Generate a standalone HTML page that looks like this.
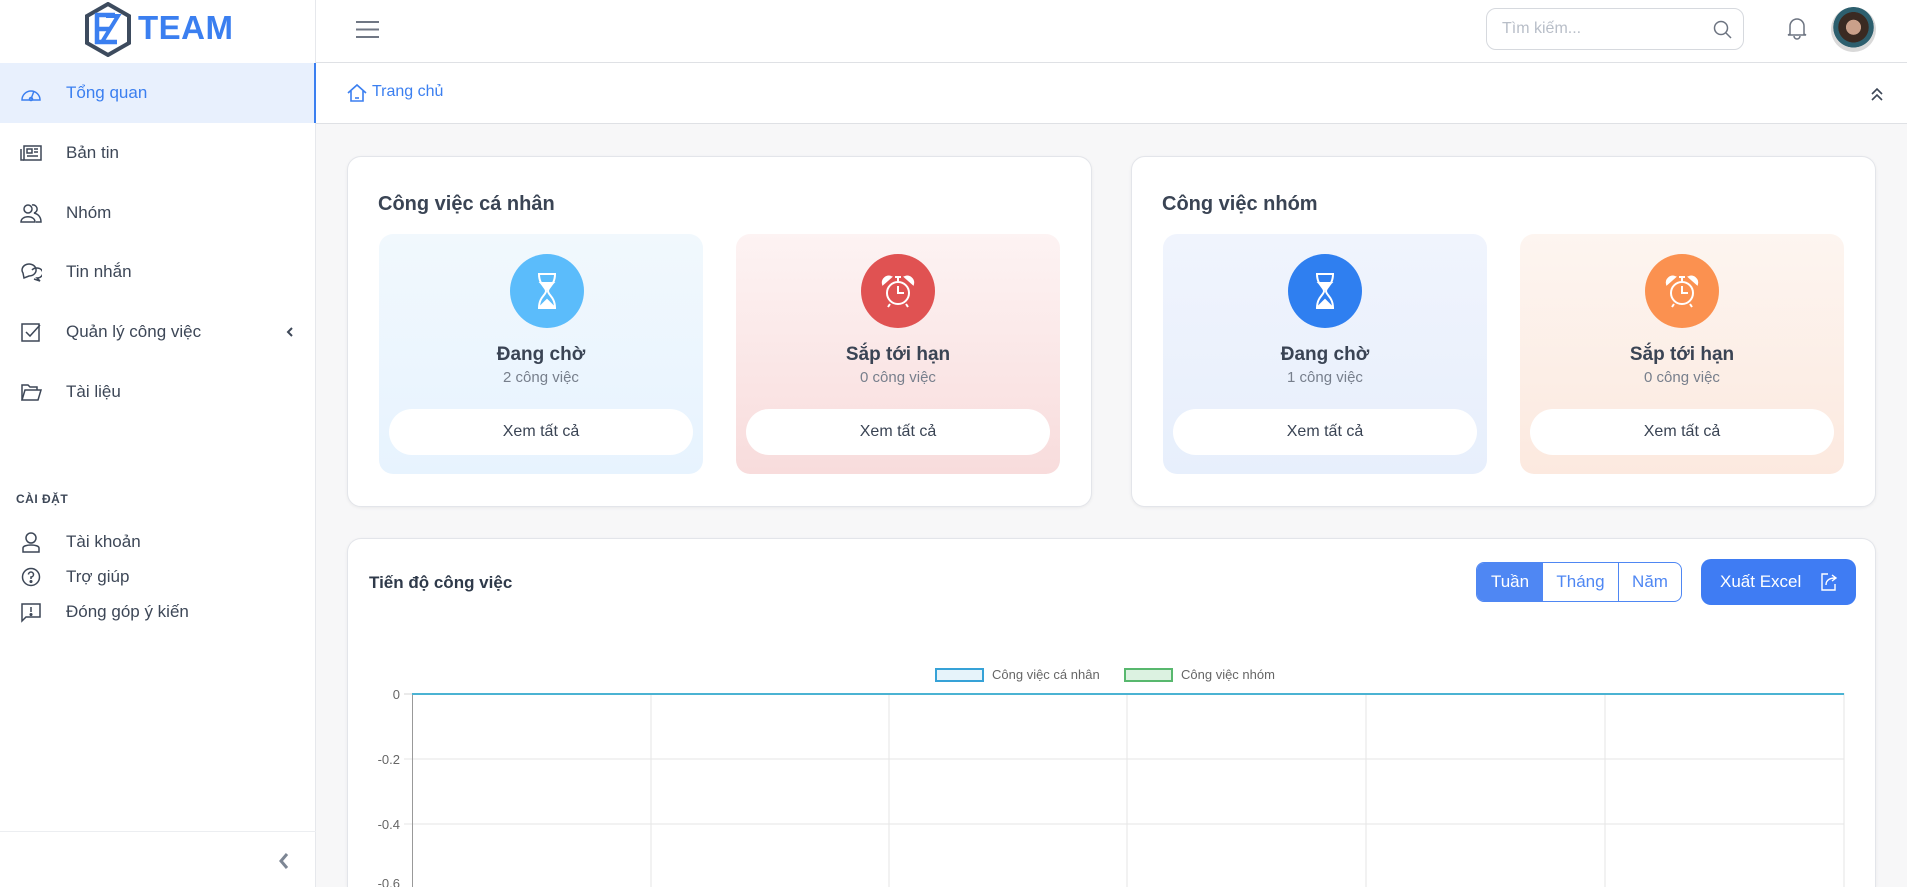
<!DOCTYPE html>
<html style="width:1907px;height:887px;overflow:hidden"><head><meta charset="utf-8">
<style>
*{box-sizing:border-box;margin:0;padding:0}
html,body{width:1907px;height:887px;overflow:hidden}
body{background:#f7f7f8;font-family:"Liberation Sans",sans-serif;color:#3a4454;position:relative}
#wrap{position:absolute;left:0;top:0;width:1907px;height:887px;overflow:hidden}
.abs{position:absolute}
#side{left:0;top:0;width:316px;height:887px;background:#fff;border-right:1px solid #e6e8ec}
.mi{position:absolute;left:0;width:316px;height:60px;display:flex;align-items:center;font-size:17px;color:#3d4757}
.mi svg{position:absolute;left:20px}
.mi span{position:absolute;left:66px}
.mi.act{background:#e8f0fd;color:#3b7ff0}
.mi.act:after{content:"";position:absolute;right:-1px;top:0;width:3px;height:60px;background:#3b7ff0}
.si{position:absolute;left:0;display:flex;align-items:center;font-size:17px;color:#3d4757}
.si svg{position:absolute;left:20px}
.si span{position:absolute;left:66px;white-space:nowrap}
#hdr{left:316px;top:0;width:1591px;height:63px;background:#fff;border-bottom:1px solid #dfe1e5}
#bc{left:316px;top:63px;width:1591px;height:61px;background:#fff;border-bottom:1px solid #dfe1e5}
.card{position:absolute;background:#fff;border:1px solid #e3e5ea;border-radius:14px;box-shadow:0 1px 3px rgba(0,0,0,.06)}
.ct{position:absolute;font-size:20px;font-weight:bold;color:#3a4454}
.box{position:absolute;width:324px;height:240px;border-radius:14px;text-align:center}
.circ{position:absolute;left:125px;top:20px;width:74px;height:74px;border-radius:50%}
.circ svg{position:absolute;left:17px;top:17px}
.bt{position:absolute;left:0;width:100%;top:110px;font-size:19px;font-weight:bold;color:#3a4454}
.bs{position:absolute;left:0;width:100%;top:135px;font-size:15px;color:#777f8c}
.pill{position:absolute;left:10px;right:10px;top:175px;height:46px;background:#fff;border-radius:23px;font-size:16px;color:#3a4454;line-height:46px}
.yl{position:absolute;font-size:13px;color:#666;text-align:right;width:40px;left:360px;line-height:15px}
</style></head><body><div id="wrap">
<div id="side" class="abs">
  <svg class="abs" style="left:84px;top:2px" width="48" height="55" viewBox="0 0 48 55">
    <polygon points="24,2 45,14 45,41 24,53 3,41 3,14" fill="none" stroke="#3d4b5e" stroke-width="4"/>
    <path d="M31 13 H13 V40 H33 M13 27 H26" fill="none" stroke="#3b7ff0" stroke-width="4.5"/>
    <path d="M22 14 H34 L18 40" fill="none" stroke="#3b7ff0" stroke-width="4"/>
  </svg>
  <div class="abs" style="left:138px;top:9px;font-size:33px;font-weight:bold;color:#3b7ff0;letter-spacing:.5px">TEAM</div>

  <div class="mi act" style="top:63px"><svg width="22" height="22" viewBox="0 0 22 22" fill="none" stroke="#3b7ff0" stroke-width="1.5"><path d="M2 18 A9 9 0 1 1 20 18 Z"/><path d="M11 17 L14 9"/><circle cx="11" cy="17" r="1.5"/></svg><span>Tổng quan</span></div>
  <div class="mi" style="top:123px"><svg width="22" height="22" viewBox="0 0 22 22" fill="none" stroke="#3d4757" stroke-width="1.5"><rect x="4" y="4" width="17" height="14"/><path d="M1 7 V18 H4"/><rect x="7" y="7" width="5" height="4"/><path d="M14 7h4M14 10h4M7 14h11"/></svg><span>Bản tin</span></div>
  <div class="mi" style="top:183px"><svg width="22" height="22" viewBox="0 0 22 22" fill="none" stroke="#3d4757" stroke-width="1.5"><circle cx="8" cy="7" r="4"/><path d="M1 20 C1 13 15 13 15 20 Z"/><path d="M12 3 A4 4 0 1 1 14 11 C18 12 21 15 21 20 H16"/></svg><span>Nhóm</span></div>
  <div class="mi" style="top:242px"><svg width="22" height="22" viewBox="0 0 22 22" fill="none" stroke="#3d4757" stroke-width="1.5"><path d="M3 12 A7 6 0 1 1 9 15 L4 17 Z"/><path d="M12 9 A6 5 0 1 1 17 17 L20 20 L14 18"/></svg><span>Tin nhắn</span></div>
  <div class="mi" style="top:302px"><svg width="22" height="22" viewBox="0 0 22 22" fill="none" stroke="#3d4757" stroke-width="1.5"><rect x="2" y="3" width="17" height="17"/><path d="M6 11 L10 15 L20 4"/></svg><span>Quản lý công việc</span><svg style="left:286px" width="8" height="10" viewBox="0 0 8 10"><path d="M6 1 L2 5 L6 9" stroke="#3d4757" stroke-width="2" fill="none"/></svg></div>
  <div class="mi" style="top:362px"><svg width="22" height="22" viewBox="0 0 22 22" fill="none" stroke="#3d4757" stroke-width="1.5"><path d="M2 19 V4 H8 L10 6 H17 V9"/><path d="M2 19 L5 9 H21 L18 19 Z"/></svg><span>Tài liệu</span></div>

  <div class="abs" style="left:16px;top:492px;font-size:12px;font-weight:bold;color:#3d4757;letter-spacing:.5px">CÀI ĐẶT</div>
  <div class="si" style="top:530px;height:24px"><svg width="22" height="22" viewBox="0 0 22 22" fill="none" stroke="#3d4757" stroke-width="1.5"><circle cx="11" cy="7" r="5"/><path d="M3 21 V17 C3 13 19 13 19 17 V21 Z"/></svg><span>Tài khoản</span></div>
  <div class="si" style="top:565px;height:24px"><svg width="22" height="22" viewBox="0 0 22 22" fill="none" stroke="#3d4757" stroke-width="1.5"><circle cx="11" cy="11" r="8.5"/><path d="M8.5 8.5 A2.5 2.5 0 1 1 11 11 V13"/><circle cx="11" cy="15.5" r=".8" fill="#3d4757"/></svg><span>Trợ giúp</span></div>
  <div class="si" style="top:600px;height:24px"><svg width="22" height="22" viewBox="0 0 22 22" fill="none" stroke="#3d4757" stroke-width="1.5"><path d="M2 3 H20 V16 H6 L2 20 Z"/><path d="M11 6 V11"/><circle cx="11" cy="13.5" r=".8" fill="#3d4757"/></svg><span>Đóng góp ý kiến</span></div>

  <div class="abs" style="left:0;top:831px;width:316px;border-top:1px solid #eceef1"></div>
  <svg class="abs" style="left:278px;top:852px" width="12" height="18" viewBox="0 0 12 18"><path d="M9 2 L3 9 L9 16" stroke="#7d8694" stroke-width="3" fill="none"/></svg>
</div>

<div id="hdr" class="abs">
  <svg class="abs" style="left:40px;top:20px" width="23" height="19" viewBox="0 0 23 19"><path d="M0 2h23M0 9.5h23M0 17h23" stroke="#707784" stroke-width="2"/></svg>
  <div class="abs" style="left:1170px;top:8px;width:258px;height:42px;border:1px solid #d6d9de;border-radius:10px">
    <span class="abs" style="left:15px;top:11px;font-size:16px;color:#b8bec8">Tìm kiếm...</span>
    <svg class="abs" style="left:226px;top:11px" width="20" height="20" viewBox="0 0 20 20" fill="none" stroke="#6c7380" stroke-width="1.5"><circle cx="8" cy="8" r="6.5"/><path d="M13 13 L18 18"/></svg>
  </div>
  <svg class="abs" style="left:1471px;top:16px" width="20" height="24" viewBox="0 0 20 24" fill="none" stroke="#6c7380" stroke-width="1.5"><path d="M3 18 V10 A7 7 0 0 1 17 10 V18 L19 19 H1 Z"/><path d="M7 20 A3 3 0 0 0 13 20"/></svg>
  <div class="abs" style="left:1515px;top:7px;width:45px;height:45px;border-radius:50%;background:radial-gradient(circle at 50% 45%,#caa08a 0 22%,#3a2a22 23% 45%,#2d5f6e 46% 60%,#d9d9d9 61%)"></div>
</div>

<div id="bc" class="abs">
  <svg class="abs" style="left:31px;top:20px" width="20" height="20" viewBox="0 0 20 20" fill="none" stroke="#3b7ff0" stroke-width="1.6"><path d="M1 10 L10 2 L19 10 M4 8 V18 H16 V8"/><path d="M8 15 H12"/></svg>
  <span class="abs" style="left:56px;top:20px;font-size:16px;color:#3b7ff0">Trang chủ</span>
  <svg class="abs" style="left:1554px;top:23px" width="14" height="16" viewBox="0 0 14 16" fill="none" stroke="#3d4757" stroke-width="1.6"><path d="M2 8 L7 3 L12 8 M2 14 L7 9 L12 14"/></svg>
</div>

<div class="card" style="left:347px;top:156px;width:745px;height:351px">
  <div class="ct" style="left:30px;top:36px">Công việc cá nhân</div>
  <div class="box" style="left:31px;top:77px;background:linear-gradient(#f1f8fd,#e7f3fe)">
    <div class="circ" style="left:131px;background:#5bbcfb"><svg width="40" height="40" viewBox="0 0 40 40" fill="none" stroke="#fff" stroke-width="2"><path d="M11 3h18M11 37h18M12 3 C12 14 19 16 19 20 C19 24 12 26 12 37 M28 3 C28 14 21 16 21 20 C21 24 28 26 28 37"/><path d="M14 12 H26 L20 18Z M14 35 L20 29 L26 35Z" fill="#fff"/></svg></div>
    <div class="bt">Đang chờ</div><div class="bs">2 công việc</div><div class="pill">Xem tất cả</div>
  </div>
  <div class="box" style="left:388px;top:77px;background:linear-gradient(#fdf3f3,#f8dcdc)">
    <div class="circ" style="left:125px;background:#e05252"><svg width="40" height="40" viewBox="0 0 40 40" fill="none" stroke="#fff" stroke-width="2"><circle cx="20" cy="22" r="11"/><path d="M20 15 V22 H26 M20 11 V6 M17 6 H23 M12 33 L10 36 M28 33 L30 36"/><path d="M5 13 A6 6 0 0 1 13 6 Z M35 13 A6 6 0 0 0 27 6 Z" fill="#fff"/></svg></div>
    <div class="bt">Sắp tới hạn</div><div class="bs">0 công việc</div><div class="pill">Xem tất cả</div>
  </div>
</div>

<div class="card" style="left:1131px;top:156px;width:745px;height:351px">
  <div class="ct" style="left:30px;top:36px">Công việc nhóm</div>
  <div class="box" style="left:31px;top:77px;background:linear-gradient(#f0f4fd,#e7effc)">
    <div class="circ" style="left:125px;background:#2f7ff0"><svg width="40" height="40" viewBox="0 0 40 40" fill="none" stroke="#fff" stroke-width="2"><path d="M11 3h18M11 37h18M12 3 C12 14 19 16 19 20 C19 24 12 26 12 37 M28 3 C28 14 21 16 21 20 C21 24 28 26 28 37"/><path d="M14 12 H26 L20 18Z M14 35 L20 29 L26 35Z" fill="#fff"/></svg></div>
    <div class="bt">Đang chờ</div><div class="bs">1 công việc</div><div class="pill">Xem tất cả</div>
  </div>
  <div class="box" style="left:388px;top:77px;background:linear-gradient(#fdf5f0,#fce9df)">
    <div class="circ" style="left:125px;background:#fb9150"><svg width="40" height="40" viewBox="0 0 40 40" fill="none" stroke="#fff" stroke-width="2"><circle cx="20" cy="22" r="11"/><path d="M20 15 V22 H26 M20 11 V6 M17 6 H23 M12 33 L10 36 M28 33 L30 36"/><path d="M5 13 A6 6 0 0 1 13 6 Z M35 13 A6 6 0 0 0 27 6 Z" fill="#fff"/></svg></div>
    <div class="bt">Sắp tới hạn</div><div class="bs">0 công việc</div><div class="pill">Xem tất cả</div>
  </div>
</div>

<div class="card" style="left:347px;top:538px;width:1529px;height:349px;border-bottom:none;border-radius:14px 14px 0 0">
  <div class="abs" style="left:21px;top:34px;font-size:17px;font-weight:bold;color:#2f3a4a">Tiến độ công việc</div>
  <div class="abs" style="left:1128px;top:23px;width:206px;height:40px;border:1px solid #4f87f3;border-radius:8px;overflow:hidden;display:flex;font-size:17px">
    <div style="width:66px;background:#4f87f3;color:#fff;text-align:center;line-height:38px">Tuần</div>
    <div style="width:76px;color:#4f87f3;text-align:center;line-height:38px;border-right:1px solid #4f87f3">Tháng</div>
    <div style="flex:1;color:#4f87f3;text-align:center;line-height:38px">Năm</div>
  </div>
  <div class="abs" style="left:1353px;top:20px;width:155px;height:46px;background:#3f7cf3;border-radius:10px;color:#fff;font-size:17px;line-height:46px;padding-left:19px">Xuất Excel
    <svg class="abs" style="left:119px;top:13px" width="20" height="20" viewBox="0 0 20 20" fill="none" stroke="#fff" stroke-width="1.4"><path d="M15 12 V18 H2 V2 H8"/><path d="M6 13 C6 8 10 6 15 6 M12 3 L16 6 L12 9"/></svg></div>
</div>
<div class="abs" style="left:935px;top:668px;width:49px;height:14px;border:2px solid #36a2d7;background:#e6f3fa"></div>
<span class="abs" style="left:992px;top:667px;font-size:13px;color:#666">Công việc cá nhân</span>
<div class="abs" style="left:1124px;top:668px;width:49px;height:14px;border:2px solid #58b86e;background:#dcf2e1"></div>
<span class="abs" style="left:1181px;top:667px;font-size:13px;color:#666">Công việc nhóm</span>
<svg class="abs" style="left:0;top:0" width="1907" height="887">
  <g stroke="#e5e5e5" stroke-width="1">
    <path d="M651 693V887M889 693V887M1127 693V887M1366 693V887M1605 693V887M1844 693V887"/>
    <path d="M404 759H1844M404 824H1844"/>
  </g>
  <path d="M412.5 693V887" stroke="#999" stroke-width="1"/>
  <path d="M404 694H1844" stroke="#d5d5d5" stroke-width="1"/>
  <path d="M412 694H1844" stroke="#4bb3d3" stroke-width="2"/>
</svg>
<div class="yl" style="top:687px">0</div>
<div class="yl" style="top:752px">-0.2</div>
<div class="yl" style="top:817px">-0.4</div>
<div class="yl" style="top:876px;height:11px;overflow:hidden">-0.6</div>
</div></body></html>
